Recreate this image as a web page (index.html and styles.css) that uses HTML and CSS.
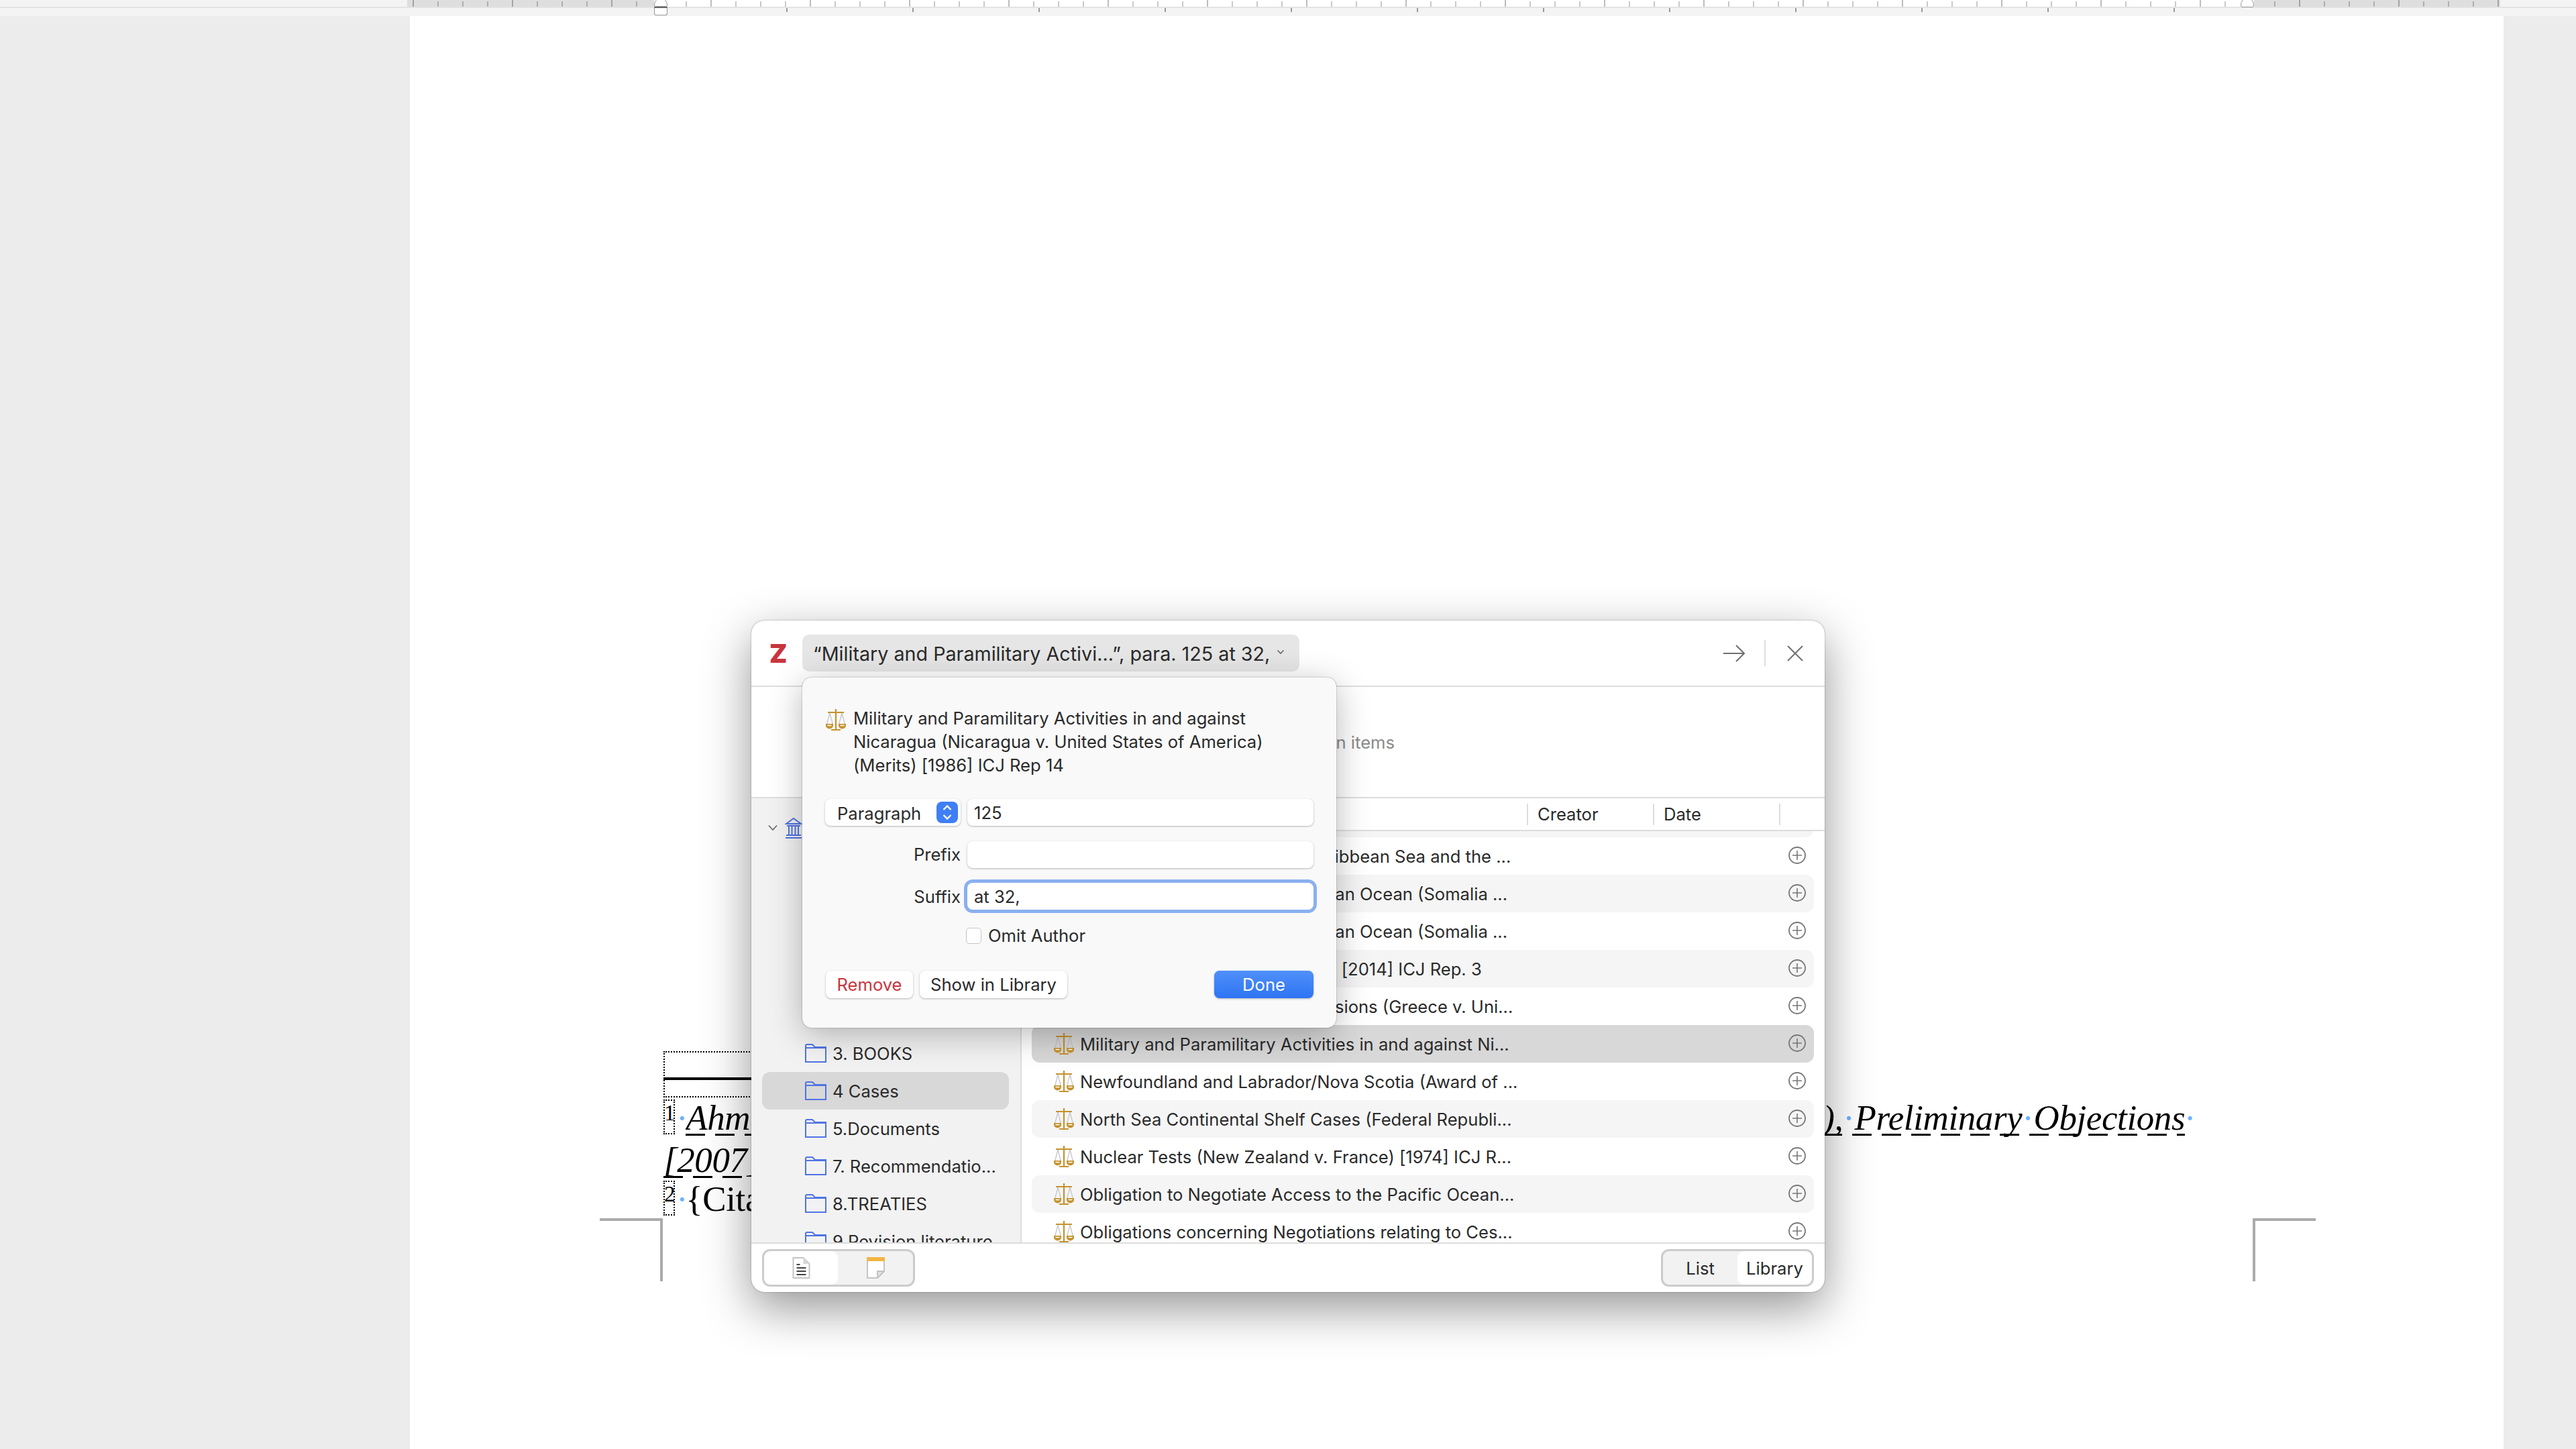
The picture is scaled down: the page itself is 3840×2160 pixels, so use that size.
FILE: index.html
```html
<!DOCTYPE html>
<html lang="en">
<head>
  <meta charset="UTF-8">
  <title>Add Citation</title>
  <link rel="stylesheet" href="styles.css">
</head>
<body>

  <svg class="defs" aria-hidden="true">
    <symbol id="scale" viewBox="0 0 30 32">
      <path d="M6 6L1.5 23M6 6L10.5 23M24 6L19.5 23M24 6L28.5 23" fill="none" stroke="#c2c2c2" stroke-width="1.2"/>
      <path d="M15 0V31M3 5H27M8 31H22" fill="none" stroke="#c4922e" stroke-width="2.2"/>
      <path d="M0 22H11V24.5A5.5 5 0 0 1 0 24.5ZM19 22H30V24.5A5.5 5 0 0 1 19 24.5Z" fill="#c4922e"/>
      <path d="M2.5 24.5H8.5M21.5 24.5H27.5" stroke="#fff" stroke-width="1.6"/>
    </symbol>
    <symbol id="folder" viewBox="0 0 32 28">
      <path d="M1 27V3A2 2 0 0 1 3 1H11L15 5H31V27ZM1 6H31" fill="none" stroke="#4f74e3" stroke-width="2"/>
    </symbol>
    <symbol id="plus" viewBox="0 0 26 26">
      <circle cx="13" cy="13" r="12" fill="none" stroke="#777" stroke-width="1.8"/>
      <path d="M13 6V20M6 13H20" stroke="#777" stroke-width="1.6"/>
    </symbol>
  </svg>

  <div class="ruler-bar">
    <div class="ruler">
      <div class="ruler-margin ruler-margin-left"></div>
      <div class="ruler-margin ruler-margin-right"></div>
    </div>
    <div class="tab-strip"><div class="tab-stops"></div></div>
    <div class="marker marker-top"></div>
    <div class="marker marker-bottom"></div>
    <div class="marker marker-right"></div>
  </div>

  <main class="page">
    <div class="crop crop-left"></div>
    <div class="crop crop-right"></div>

    <div class="footnotes">
      <div class="separator"><div class="separator-rule"></div></div>

      <div class="note-line">
        <span class="fn-mark">1</span><span class="sp">·</span>
        <div class="note-text">
          <span class="ul it note-left">Ahmadou<span class="sp">·</span>Sadio<span class="sp">·</span>Diallo<span class="sp">·</span>(Republic of Guinea v. Democratic Republic of the Congo</span>
          <span class="ul it">),<span class="sp">·</span>Preliminary<span class="sp">·</span>Objections</span>
          <span class="sp it">·</span>
        </div>
      </div>
      <div class="note-line note-cont">
        <span class="ul it">[2007] ICJ Rep 582</span>
      </div>
      <div class="note-line note-next">
        <span class="fn-mark">2</span><span class="sp">·</span>
        <span class="plain">{Citation}</span>
      </div>
    </div>
  </main>

  <section class="dialog">
    <header class="dlg-head">
      <span class="logo">Z</span>
      <div class="bubble">
        <span>“Military and Paramilitary Activi...”, para. 125 at 32,</span>
        <svg class="bubble-chevron" viewBox="0 0 12 8"><path d="M1.5 1.5L6 6L10.5 1.5" fill="none" stroke="#666" stroke-width="1.6"/></svg>
      </div>
      <svg class="head-arrow" viewBox="0 0 32 26"><path d="M0 13H30M19 1L31 13L19 25" fill="none" stroke="#707070" stroke-width="2"/></svg>
      <span class="head-sep"></span>
      <svg class="head-close" viewBox="0 0 24 24"><path d="M1 1L23 23M23 1L1 23" fill="none" stroke="#707070" stroke-width="2"/></svg>
    </header>

    <div class="search-area">Open items</div>

    <div class="dlg-body">
      <aside class="collections">
        <div class="coll-row coll-library">
          <svg class="coll-chevron" viewBox="0 0 16 10"><path d="M1 1L8 8.5L15 1" fill="none" stroke="#666" stroke-width="1.8"/></svg>
          <svg class="coll-lib-icon" viewBox="0 0 26 32">
            <path d="M2 10L13 2L24 10ZM1 31H25M2 27H24M3 13H23M6 13V27M10.500 13V27M15.500 13V27M20 13V27" fill="none" stroke="#4f74e3" stroke-width="2"/>
          </svg>
          <span>My Library</span>
        </div>
        <div class="coll-row coll-first"><svg class="folder"><use href="#folder"/></svg><span>3. BOOKS</span></div>
        <div class="coll-row selected"><svg class="folder"><use href="#folder"/></svg><span>4 Cases</span></div>
        <div class="coll-row"><svg class="folder"><use href="#folder"/></svg><span>5.Documents</span></div>
        <div class="coll-row"><svg class="folder"><use href="#folder"/></svg><span>7. Recommendatio...</span></div>
        <div class="coll-row"><svg class="folder"><use href="#folder"/></svg><span>8.TREATIES</span></div>
        <div class="coll-row"><svg class="folder"><use href="#folder"/></svg><span>9 Revision literature</span></div>
      </aside>

      <div class="items">
        <div class="items-head">
          <div class="col col-title">Title</div>
          <div class="col col-creator">Creator</div>
          <div class="col col-date">Date</div>
          <div class="col col-end"></div>
        </div>
        <div class="item-list">
          <div class="item alt item-first"><svg class="scale"><use href="#scale"/></svg><span class="item-title">Land and Maritime Boundary between Cameroon ...</span><svg class="plus"><use href="#plus"/></svg></div>
          <div class="item"><svg class="scale"><use href="#scale"/></svg><span class="item-title">Maritime Delimitation in the Caribbean Sea and the ...</span><svg class="plus"><use href="#plus"/></svg></div>
          <div class="item alt"><svg class="scale"><use href="#scale"/></svg><span class="item-title">Maritime Delimitation in the Indian Ocean (Somalia ...</span><svg class="plus"><use href="#plus"/></svg></div>
          <div class="item"><svg class="scale"><use href="#scale"/></svg><span class="item-title">Maritime Delimitation in the Indian Ocean (Somalia ...</span><svg class="plus"><use href="#plus"/></svg></div>
          <div class="item alt"><svg class="scale"><use href="#scale"/></svg><span class="item-title">Maritime Dispute (Peru v. Chile) [2014] ICJ Rep. 3</span><svg class="plus"><use href="#plus"/></svg></div>
          <div class="item"><svg class="scale"><use href="#scale"/></svg><span class="item-title">Mavrommatis Palestine Concessions (Greece v. Uni...</span><svg class="plus"><use href="#plus"/></svg></div>
          <div class="item selected"><svg class="scale"><use href="#scale"/></svg><span class="item-title">Military and Paramilitary Activities in and against Ni...</span><svg class="plus"><use href="#plus"/></svg></div>
          <div class="item"><svg class="scale"><use href="#scale"/></svg><span class="item-title">Newfoundland and Labrador/Nova Scotia (Award of ...</span><svg class="plus"><use href="#plus"/></svg></div>
          <div class="item alt"><svg class="scale"><use href="#scale"/></svg><span class="item-title">North Sea Continental Shelf Cases (Federal Republi...</span><svg class="plus"><use href="#plus"/></svg></div>
          <div class="item"><svg class="scale"><use href="#scale"/></svg><span class="item-title">Nuclear Tests (New Zealand v. France) [1974] ICJ R...</span><svg class="plus"><use href="#plus"/></svg></div>
          <div class="item alt"><svg class="scale"><use href="#scale"/></svg><span class="item-title">Obligation to Negotiate Access to the Pacific Ocean...</span><svg class="plus"><use href="#plus"/></svg></div>
          <div class="item"><svg class="scale"><use href="#scale"/></svg><span class="item-title">Obligations concerning Negotiations relating to Ces...</span><svg class="plus"><use href="#plus"/></svg></div>
        </div>
      </div>
    </div>

    <footer class="dlg-foot">
      <div class="segment">
        <div class="seg-btn seg-doc active">
          <svg class="seg-icon" viewBox="0 0 26 32">
            <path d="M1 1H16L25 10V31H1Z" fill="#fff" stroke="#c4c4c4" stroke-width="2"/>
            <path d="M16 1V10H25Z" fill="#d6d6d6"/>
            <path d="M6 11H11M6 16H20M6 21H20M6 26H20" stroke="#444" stroke-width="2"/>
          </svg>
        </div>
        <div class="seg-btn seg-note">
          <svg class="seg-icon" viewBox="0 0 27 32">
            <path d="M1 1H26V21L16 31H1Z" fill="#fff" stroke="#c4c4c4" stroke-width="2"/>
            <path d="M16 31V21H26Z" fill="#e2e2e2" stroke="#c4c4c4" stroke-width="2"/>
            <path d="M0 0H27V6H0Z" fill="#f2b544"/>
          </svg>
        </div>
      </div>
      <div class="segment">
        <div class="seg-btn seg-list">List</div>
        <div class="seg-btn seg-library active">Library</div>
      </div>
    </footer>

    <div class="popup">
      <div class="popup-title">
        <svg class="scale"><use href="#scale"/></svg>
        <p>Military and Paramilitary Activities in and against Nicaragua (Nicaragua v. United States of America) (Merits) [1986] ICJ Rep 14</p>
      </div>
      <div class="popup-grid">
        <div class="locator">
          <span>Paragraph</span>
          <span class="stepper">
            <svg viewBox="0 0 32 32"><path d="M10.500 12L16 6.500L21.500 12M10.500 20L16 25.500L21.500 20" fill="none" stroke="#fff" stroke-width="2.400"/></svg>
          </span>
        </div>
        <div class="field">125</div>
        <div class="field-label">Prefix</div>
        <div class="field"></div>
        <div class="field-label">Suffix</div>
        <div class="field focused">at 32,</div>
        <div></div>
        <div class="omit"><span class="checkbox"></span><span>Omit Author</span></div>
      </div>
      <div class="popup-actions">
        <button class="btn btn-remove">Remove</button>
        <button class="btn btn-show">Show in Library</button>
        <button class="btn btn-done">Done</button>
      </div>
    </div>
  </section>

</body>
</html>
```

FILE: styles.css
```css
* {
  box-sizing: border-box;
}
html, body {
  margin: 0;
  height: 2160px;
  overflow: hidden;
}
body {
  background-color: #ececec;
  font-family: Inter, "Noto Sans", sans-serif;
  font-size: 25.6px;
  color: #2a2a2a;
  position: relative;
}
.defs {
  position: absolute;
  width: 0;
  height: 0;
}

/* ruler */
.ruler-bar {
  height: 24px;
  background-color: #f4f4f4;
  position: relative;
}
.ruler {
  height: 10px;
  width: 3120px;
  margin-left: 607px;
  position: relative;
  background-color: #fff;
  background-image:
    repeating-linear-gradient(90deg, #bdbdbd 0 2px, transparent 2px 148px),
    repeating-linear-gradient(90deg, #c9c9c9 0 2px, transparent 2px 37px);
  background-size: 100% 10px, 100% 8px;
  background-position: 8px bottom, 8px bottom;
  background-repeat: no-repeat;
}
.ruler-margin {
  position: absolute;
  top: 0;
  bottom: 0;
  background-color: rgba(0, 0, 0, 0.13);
}
.ruler-margin-left {
  left: 0;
  width: 368px;
}
.ruler-margin-right {
  right: 0;
  width: 367px;
}
.tab-strip {
  height: 14px;
  border-top: 2px solid #e3e3e3;
  padding-left: 1172px;
}
.tab-stops {
  width: 2076px;
  height: 6px;
  background-image: repeating-linear-gradient(90deg, #999 0 2px, transparent 2px 188px);
}
.marker {
  position: absolute;
  background-color: #fff;
  border: 1px solid #999;
}
.marker-top {
  left: 975px;
  top: -3px;
  width: 20px;
  height: 13px;
  border-radius: 10px 10px 2px 2px;
}
.marker-bottom {
  left: 975px;
  top: 10px;
  width: 20px;
  height: 13px;
  border-top: 2px solid #666;
  border-radius: 0 0 3px 3px;
}
.marker-right {
  left: 3340px;
  top: -3px;
  width: 20px;
  height: 14px;
  border-radius: 10px 10px 3px 3px;
}

/* document page */
.page {
  width: 3121px;
  height: 2136px;
  margin-left: 611px;
  padding: 1543px 0 0 378px;
  background-color: #fff;
  position: relative;
  font-family: "Liberation Serif", serif;
  font-size: 53px;
  letter-spacing: -0.4px;
  color: #000;
}
.crop {
  position: absolute;
  top: 1792px;
  width: 94px;
  height: 94px;
  border-top: 4px solid #ababab;
}
.crop-left {
  left: 283px;
  border-right: 4px solid #ababab;
}
.crop-right {
  left: 2747px;
  border-left: 4px solid #ababab;
}
.separator {
  width: 500px;
  height: 69px;
  border: 2px dotted #000;
  border-right: none;
}
.separator-rule {
  height: 4px;
  margin: 37px 0 0 -2px;
  background-color: #000;
}
.note-line {
  display: flex;
  width: 2281px;
  height: 60px;
  line-height: 60px;
}
.note-cont {
  margin-top: 3px;
}
.note-next {
  margin-top: -2px;
}
.fn-mark {
  width: 17px;
  height: 52px;
  margin-top: 3px;
  border: 2px dotted #000;
  font-size: 33px;
  line-height: 36px;
  text-indent: -1px;
  flex-shrink: 0;
}
.note-text {
  flex: 1;
  min-width: 0;
  display: flex;
  justify-content: space-between;
  margin-left: -3px;
}
.note-left {
  flex: 1;
  min-width: 0;
  overflow: hidden;
}
.sp {
  color: #6fb1ff;
  margin-left: 2px;
  font-style: normal;
}
.it {
  font-style: italic;
  white-space: nowrap;
}
.it .sp {
  margin-left: 0;
}
.note-text > .sp {
  margin-left: 0;
}
.ul {
  background-image: linear-gradient(90deg, #000 66%, transparent 66%);
  background-size: 44px 3px;
  background-position: 0 54px;
  background-repeat: repeat-x;
}
.plain {
  margin-left: -3px;
}

/* citation dialog */
.dialog {
  position: absolute;
  left: 1120px;
  top: 925px;
  width: 1600px;
  height: 1001px;
  display: flex;
  flex-direction: column;
  background-color: #fff;
  border-radius: 20px;
  box-shadow: 0 24px 70px rgba(0, 0, 0, 0.42), 0 0 2px rgba(0, 0, 0, 0.45);
}
.dlg-head {
  height: 99px;
  flex-shrink: 0;
  display: flex;
  align-items: center;
  padding: 0 32px 0 27px;
  border-bottom: 2px solid #ddd;
}
.logo {
  width: 49px;
  font-size: 38px;
  font-weight: 900;
  color: #c9353c;
  line-height: 1;
}
.bubble {
  width: 741px;
  height: 55px;
  padding: 2px 0 0 16px;
  display: flex;
  align-items: center;
  background-color: #e6e6e6;
  border-radius: 10px;
  font-size: 28.7px;
  white-space: nowrap;
}
.bubble-chevron {
  width: 12px;
  height: 8px;
  margin-left: 10px;
  margin-top: -6px;
}
.head-arrow {
  width: 32px;
  height: 26px;
  margin-left: auto;
}
.head-sep {
  width: 2px;
  height: 39px;
  margin: 0 32px 0 29px;
  background-color: #ddd;
}
.head-close {
  width: 24px;
  height: 24px;
}
.search-area {
  height: 166px;
  flex-shrink: 0;
  display: flex;
  align-items: center;
  justify-content: flex-end;
  padding-right: 641px;
  color: #8a8a8a;
  border-bottom: 2px solid #ddd;
}
.dlg-body {
  flex: 1;
  min-height: 0;
  display: flex;
}
.collections {
  width: 403px;
  flex-shrink: 0;
  padding: 16px 17px 0 16px;
  background-color: #f2f2f2;
  border-right: 2px solid #ddd;
  overflow: hidden;
}
.coll-row {
  height: 56px;
  display: flex;
  align-items: center;
  padding-left: 64px;
  border-radius: 12px;
  white-space: nowrap;
}
.coll-row.selected {
  background-color: #d8d8d8;
}
.coll-library {
  padding-left: 9px;
}
.coll-chevron {
  width: 14px;
  height: 10px;
  margin-right: 11px;
}
.coll-lib-icon {
  width: 26px;
  height: 32px;
  margin-right: 10px;
}
.coll-first {
  margin-top: 280px;
}
.folder {
  width: 32px;
  height: 28px;
  margin-right: 9px;
  flex-shrink: 0;
}
.items {
  flex: 1;
  min-width: 0;
  display: flex;
  flex-direction: column;
}
.items-head {
  height: 49px;
  flex-shrink: 0;
  display: flex;
  align-items: center;
  border-bottom: 2px solid #ddd;
}
.col {
  height: 32px;
  line-height: 32px;
  padding-left: 14px;
  border-left: 2px solid #ddd;
}
.col-title {
  width: 753px;
  border-left: none;
}
.col-creator, .col-date {
  width: 188px;
}
.item-list {
  flex: 1;
  min-height: 0;
  overflow: hidden;
  padding: 0 16px 0 15px;
}
.item {
  height: 56px;
  display: flex;
  align-items: center;
  padding: 0 12px 0 33px;
  border-radius: 12px;
}
.item-first {
  margin-top: -47px;
}
.item.alt {
  background-color: #f5f5f5;
}
.item.selected {
  background-color: #d8d8d8;
}
.scale {
  width: 30px;
  height: 32px;
  flex-shrink: 0;
}
.item-title {
  flex: 1;
  margin-left: 9px;
  white-space: nowrap;
}
.plus {
  width: 26px;
  height: 26px;
  margin-top: -2px;
}
.dlg-foot {
  height: 74px;
  flex-shrink: 0;
  display: flex;
  justify-content: space-between;
  padding: 8px 16px 0;
  border-top: 2px solid #ddd;
}
.segment {
  width: 228px;
  height: 56px;
  display: flex;
  background-color: #f2f2f2;
  border: 3px solid #ccc;
  border-radius: 12px;
}
.seg-btn {
  display: flex;
  align-items: center;
  justify-content: center;
  border-radius: 10px;
}
.seg-btn.active {
  background-color: #fff;
}
.seg-doc {
  width: 110px;
}
.seg-note {
  flex: 1;
}
.seg-list {
  width: 111px;
}
.seg-library {
  flex: 1;
}
.seg-icon {
  width: 27px;
  height: 32px;
}

/* citation properties popup */
.popup {
  position: absolute;
  left: 76px;
  top: 85px;
  width: 796px;
  height: 522px;
  padding: 43px 34px 0;
  background-color: #f9f9f9;
  border-radius: 14px;
  box-shadow: 0 10px 50px rgba(0, 0, 0, 0.28), 0 0 2px rgba(0, 0, 0, 0.4);
}
.popup-title {
  display: flex;
  align-items: flex-start;
  padding-left: 1px;
}
.popup-title .scale {
  margin-top: 4px;
}
.popup-title p {
  margin: 0 0 0 11px;
  width: 640px;
  line-height: 35px;
}
.popup-grid {
  display: grid;
  grid-template-columns: 202px 516px;
  grid-auto-rows: 40px;
  column-gap: 10px;
  row-gap: 22.5px;
  margin-top: 33px;
}
.locator {
  display: flex;
  align-items: center;
  justify-content: space-between;
  padding: 2px 4px 0 18px;
  background-color: #fff;
  border-radius: 8px;
  box-shadow: 0 1px 3px rgba(0, 0, 0, 0.28);
}
.stepper {
  width: 32px;
  height: 32px;
  margin-top: -2px;
  background-color: #3f7ff5;
  border-radius: 8px;
}
.stepper svg {
  display: block;
  width: 32px;
  height: 32px;
}
.field {
  display: flex;
  align-items: center;
  padding-left: 10px;
  background-color: #fff;
  border-radius: 8px;
  box-shadow: 0 1px 3px rgba(0, 0, 0, 0.28);
}
.field.focused {
  box-shadow: 0 0 0 5px #8ab0f0;
}
.field-label {
  display: flex;
  align-items: center;
  justify-content: flex-end;
}
.omit {
  display: flex;
  align-items: center;
  margin: -8px 0 0 -2px;
}
.checkbox {
  width: 23px;
  height: 24px;
  margin-right: 10px;
  background-color: #fff;
  border: 1px solid #c6c6c6;
  border-radius: 5px;
}
.popup-actions {
  display: flex;
  gap: 10px;
  margin-top: 28px;
  padding-left: 1px;
}
.btn {
  height: 41px;
  padding: 0;
  font-family: inherit;
  font-size: 25.6px;
  color: #2a2a2a;
  background-color: #fff;
  border: none;
  border-radius: 8px;
  box-shadow: 0 1px 3px rgba(0, 0, 0, 0.28);
}
.btn-remove {
  width: 130px;
  color: #c9353c;
}
.btn-show {
  width: 220px;
}
.btn-done {
  width: 148px;
  margin-left: auto;
  color: #fff;
  background-image: linear-gradient(#4f90fa, #2f74f3);
}
```
